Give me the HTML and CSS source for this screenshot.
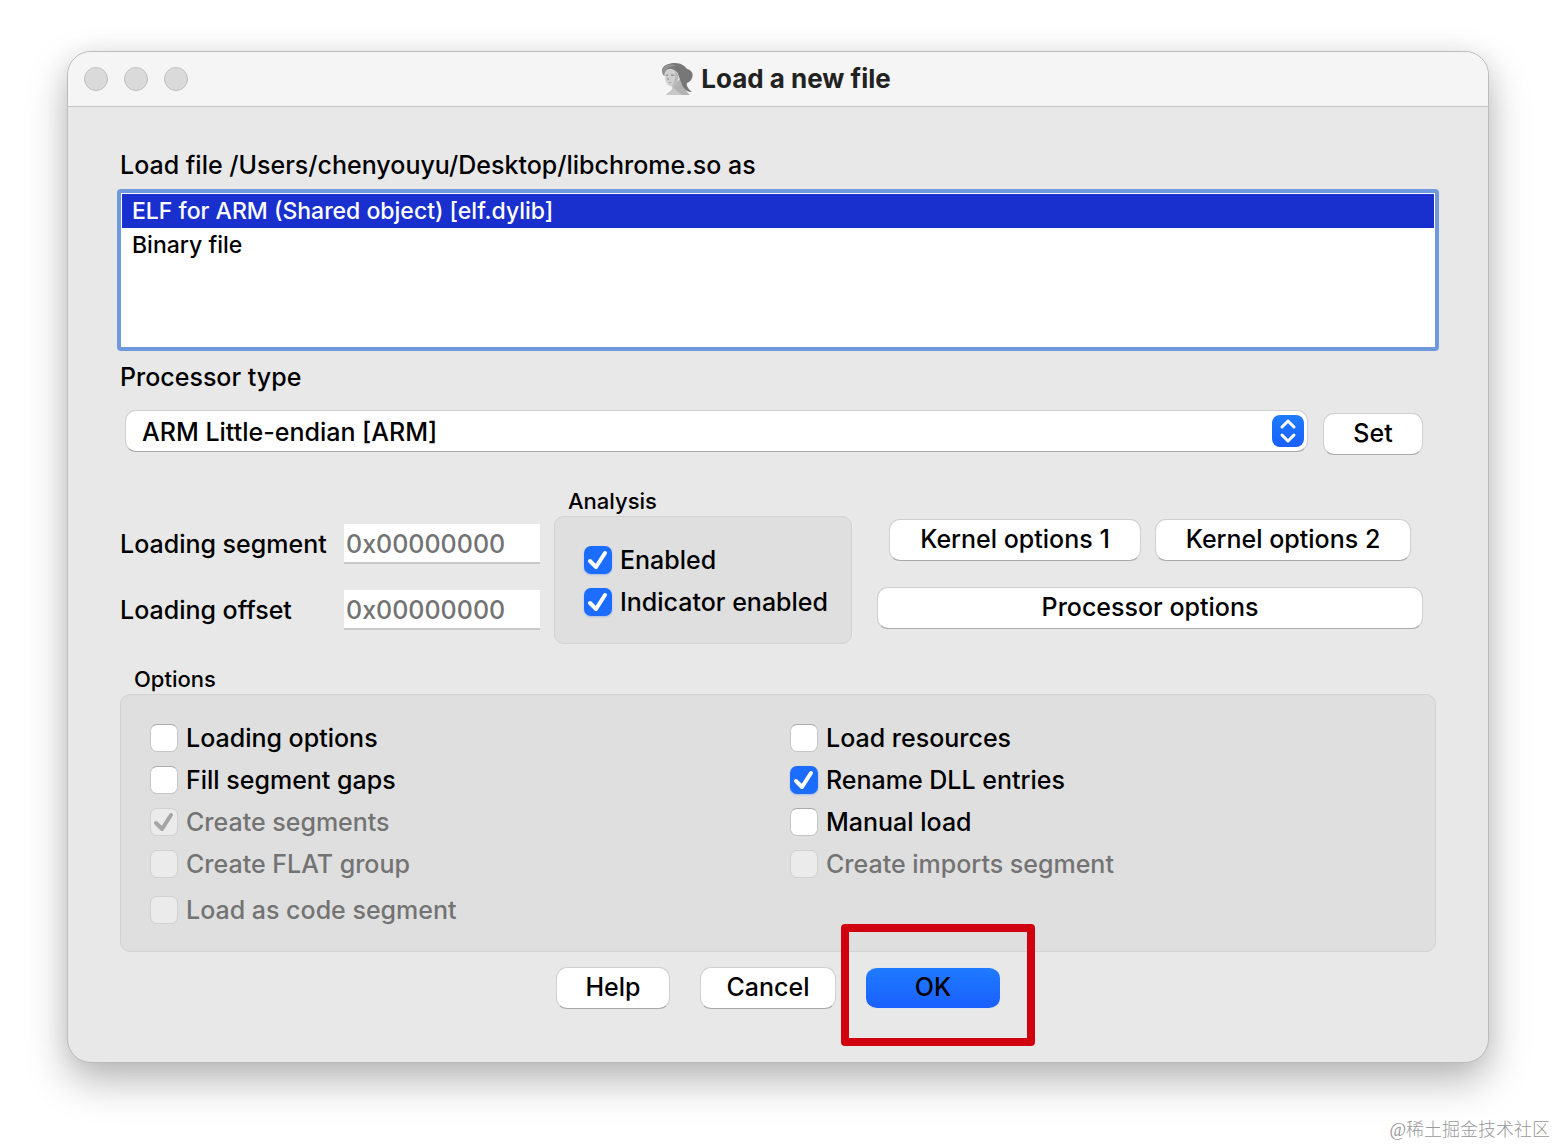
FILE: index.html
```html
<!DOCTYPE html>
<html lang="en">
<head>
    <meta charset="UTF-8">
    <meta name="viewport" content="width=device-width, initial-scale=1.0">
    <title>Load a new file</title>
    <link rel="stylesheet" href="styles.css">
</head>
<body>
    <div class="window">
        <header class="titlebar">
            <div class="lights">
                <span class="light"></span>
                <span class="light"></span>
                <span class="light"></span>
            </div>
            <h1 class="title">
                <svg class="portrait" viewBox="0 0 32 33" aria-hidden="true">
                    <path fill="#c8c8c8" d="M10 20L21 18C21 24 25 27 29 32H5C7 29 11 28 11 25Z"/>
                    <path fill="#b2b2b2" d="M11 22C15 21 18 18 19 15L22 20C22 25 25 28 28 32H21C17 29 13 26 11 22Z"/>
                    <path fill="#777" d="M1 7C2 2 8 0 14 0C20 0 24 3 26 6C30 7 33 10 31 15C30 18 28 19 26 20C25 22 27 26 31 29C27 29 24 27 22 24L16 9L4 9L2 12Z"/>
                    <path fill="#d0d0d0" d="M4 9C6 5 10 5 13 7C17 9 18 13 17 17C16 21 12 24 9 23C6 22 4 18 4 14Z"/>
                    <path fill="#b8b8b8" d="M14 8C17 10 18 14 17 17C16 20 14 22 11 23C13 20 15 15 14 8Z"/>
                    <path fill="#919191" d="M1 7C3 2 10 0 15 3C12 3 8 4 6 6C4 8 3 10 4 13L2 12Z"/>
                    <path fill="#999" d="M5 12L7 11V13H5ZM10 11L14 12L13 13H10ZM7 14L8 17L6 17ZM7 19L11 19L9 20Z"/>
                </svg>
                Load a new file
            </h1>
        </header>
        <form class="content">
            <label for="loader">Load file /Users/chenyouyu/Desktop/libchrome.so as</label>
            <select class="loaders" id="loader" size="4">
                <option selected>ELF for ARM (Shared object) [elf.dylib]</option>
                <option>Binary file</option>
            </select>

            <label class="processor-label" for="processor">Processor type</label>
            <div class="processor-row">
                <div class="dropdown">
                    <select class="processor" id="processor">
                        <option>ARM Little-endian [ARM]</option>
                    </select>
                    <svg class="arrows" viewBox="0 0 32 32" aria-hidden="true">
                        <path d="M10 12L16 6L22 12M10 20L16 26L22 20"/>
                    </svg>
                </div>
                <button class="btn btn-set" type="button">Set</button>
            </div>

            <div class="settings">
                <div class="fields">
                    <label for="segment">Loading segment</label>
                    <input class="field" type="text" id="segment" value="0x00000000" disabled>
                    <label for="offset">Loading offset</label>
                    <input class="field" type="text" id="offset" value="0x00000000" disabled>
                </div>
                <fieldset class="group">
                    <legend class="group-title">Analysis</legend>
                    <div class="group-box analysis">
                        <label class="check"><input type="checkbox" checked>Enabled</label>
                        <label class="check"><input type="checkbox" checked>Indicator enabled</label>
                    </div>
                </fieldset>
                <div class="more">
                    <div class="kernel">
                        <button class="btn" type="button">Kernel options 1</button>
                        <button class="btn" type="button">Kernel options 2</button>
                    </div>
                    <button class="btn" type="button">Processor options</button>
                </div>
            </div>

            <fieldset class="group options">
                <legend class="group-title">Options</legend>
                <div class="group-box columns">
                    <div class="column">
                        <label class="check"><input type="checkbox">Loading options</label>
                        <label class="check"><input type="checkbox">Fill segment gaps</label>
                        <label class="check off"><input type="checkbox" checked disabled>Create segments</label>
                        <label class="check off"><input type="checkbox" disabled>Create FLAT group</label>
                        <label class="check off last"><input type="checkbox" disabled>Load as code segment</label>
                    </div>
                    <div class="column">
                        <label class="check"><input type="checkbox">Load resources</label>
                        <label class="check"><input type="checkbox" checked>Rename DLL entries</label>
                        <label class="check"><input type="checkbox">Manual load</label>
                        <label class="check off"><input type="checkbox" disabled>Create imports segment</label>
                    </div>
                </div>
            </fieldset>

            <div class="actions">
                <button class="btn btn-help" type="button">Help</button>
                <button class="btn btn-cancel" type="button">Cancel</button>
                <div class="marked">
                    <button class="btn btn-ok" type="submit">OK</button>
                    <span class="marker"></span>
                </div>
            </div>
        </form>
    </div>
    <div class="watermark">@稀土掘金技术社区</div>
</body>
</html>
```

FILE: styles.css
```css
*{
    box-sizing: border-box;
}

body{
    margin: 0;
    padding: 51px 67px 83px;
    background-color: white;
    color: black;
    font-family: Inter, "Liberation Sans", sans-serif;
    font-size: 25px;
    font-weight: 450;
    line-height: 30px;
}

button, input, select{
    margin: 0;
    font: inherit;
    color: inherit;
}

.window{
    background-color: #e8e8e8;
    border: 1px solid #bbb;
    border-radius: 24px;
    box-shadow: 0 18px 40px rgba(0,0,0,0.28), 0 0 24px rgba(0,0,0,0.06);
    overflow: hidden;
}

.titlebar{
    display: grid;
    grid-template-columns: 1fr auto 1fr;
    align-items: center;
    height: 55px;
    padding: 0 20px 0 16px;
    background-color: #f5f5f5;
    border-bottom: 1px solid #c4c4c4;
}

.lights{
    display: flex;
    gap: 16px;
}

.light{
    width: 24px;
    height: 24px;
    border: 1px solid #c0c0c0;
    border-radius: 50%;
    background-color: #dadada;
}

.title{
    display: flex;
    align-items: center;
    gap: 8px;
    margin: 0;
    font-size: 26px;
    font-weight: 700;
    color: #222;
}

.portrait{
    width: 32px;
    height: 33px;
}

.content{
    display: flex;
    flex-direction: column;
    padding: 43px 52px 53px;
}

.loaders{
    margin: 9px -3px 0;
    height: 162px;
    padding: 1px;
    border: 4px solid #7098dd;
    border-radius: 4px;
    outline: none;
    background-color: white;
    font-size: 23px;
    overflow: hidden;
}

.loaders option{
    min-height: 34px;
    padding: 3px 10px 0;
    font-weight: 500;
}

.loaders option:checked{
    background: linear-gradient(#1930ce, #1930ce);
    -webkit-text-fill-color: white;
}

.processor-label{
    margin-top: 11px;
}

.processor-row{
    display: flex;
    align-items: flex-start;
    gap: 15px;
    margin: 18px 13px 0 5px;
}

.dropdown{
    position: relative;
    flex: 1;
}

.processor{
    appearance: none;
    display: block;
    width: 100%;
    height: 42px;
    padding: 1px 50px 0 16px;
    border: 1px solid #cfcfcf;
    border-bottom-color: #aaa;
    border-radius: 11px;
    background-color: white;
}

.arrows{
    position: absolute;
    top: 5px;
    right: 4px;
    width: 32px;
    height: 32px;
    border-radius: 8px;
    background: linear-gradient(#1f7bff, #1a5fff);
    pointer-events: none;
}

.arrows path{
    fill: none;
    stroke: white;
    stroke-width: 3;
    stroke-linecap: round;
    stroke-linejoin: round;
}

.btn{
    height: 42px;
    padding: 0 0 2px;
    border: 1px solid #cfcfcf;
    border-bottom-color: #aaa;
    border-radius: 11px;
    background-color: white;
}

.btn-set{
    width: 100px;
    margin-top: 3px;
}

.settings{
    display: grid;
    grid-template-columns: 420px 298px 1fr;
    column-gap: 14px;
    margin-top: 33px;
}

.fields{
    display: grid;
    grid-template-columns: 1fr 196px;
    grid-auto-rows: 40px;
    row-gap: 26px;
    align-items: center;
    padding-top: 36px;
}

.field{
    width: 100%;
    height: 40px;
    padding: 2px 2px 0;
    border: 0;
    border-bottom: 2px solid #c8c8c8;
    background-color: white;
    color: #737373;
}

.group{
    min-width: 0;
    margin: 0;
    padding: 0;
    border: 0;
}

.group-title{
    padding: 0 14px 2px;
    font-size: 22px;
    line-height: 26px;
}

.group-box{
    border: 1px solid #d2d2d2;
    border-radius: 10px;
    background-color: #dfdfdf;
}

.analysis{
    display: flex;
    flex-direction: column;
    gap: 12px;
    padding: 28px 29px 26px;
}

.check{
    display: flex;
    align-items: center;
    gap: 8px;
    height: 30px;
    white-space: nowrap;
}

.check input{
    appearance: none;
    flex: none;
    width: 28px;
    height: 28px;
    border: 1px solid #c6c6c6;
    border-top-color: #aaa;
    border-radius: 7px;
    background: white center / 28px 28px no-repeat;
}

.check input:checked{
    border: 0;
    background-color: #1c6dff;
    background-image: url("data:image/svg+xml,%3Csvg xmlns='http://www.w3.org/2000/svg' viewBox='0 0 28 28'%3E%3Cpath d='M6 15L12 21L21 7' fill='none' stroke='white' stroke-width='4' stroke-linecap='round' stroke-linejoin='round'/%3E%3C/svg%3E");
    box-shadow: 0 1px 2px rgba(28,109,255,0.3);
}

.check input:disabled{
    border: 1px solid #d0d0d0;
    background-color: #ebebeb;
    box-shadow: none;
}

.check input:checked:disabled{
    background-image: url("data:image/svg+xml,%3Csvg xmlns='http://www.w3.org/2000/svg' viewBox='0 0 28 28'%3E%3Cpath d='M6 15L12 21L21 7' fill='none' stroke='%23a5a5a5' stroke-width='4' stroke-linecap='round' stroke-linejoin='round'/%3E%3C/svg%3E");
}

.off{
    color: #737373;
}

.more{
    display: flex;
    flex-direction: column;
    gap: 26px;
    padding: 31px 13px 0 11px;
}

.kernel{
    display: grid;
    grid-template-columns: 252fr 256fr;
    gap: 14px;
    padding: 0 12px;
}

.options{
    margin-top: 22px;
}

.columns{
    display: grid;
    grid-template-columns: 640px 1fr;
    padding: 28px 29px 26px;
}

.column{
    display: flex;
    flex-direction: column;
    gap: 12px;
}

.last{
    margin-top: 4px;
}

.actions{
    display: flex;
    justify-content: center;
    gap: 30px;
    margin-top: 15px;
}

.btn-help{
    width: 114px;
}

.btn-cancel{
    width: 136px;
}

.btn-ok{
    display: block;
    width: 134px;
    border: 1px solid #e0e4ee;
    border-width: 1px 0;
    background: linear-gradient(#1f7bff, #1a5fff);
}

.marked{
    position: relative;
}

.marker{
    position: absolute;
    top: -43px;
    right: -35px;
    bottom: -37px;
    left: -25px;
    border: 8px solid #d0000f;
    border-radius: 4px;
    pointer-events: none;
}

.watermark{
    position: absolute;
    right: 6px;
    bottom: 2px;
    font-family: "Liberation Serif", "Noto Sans CJK SC", serif;
    font-size: 18px;
    font-weight: 300;
    line-height: 28px;
    color: #999;
}
```
